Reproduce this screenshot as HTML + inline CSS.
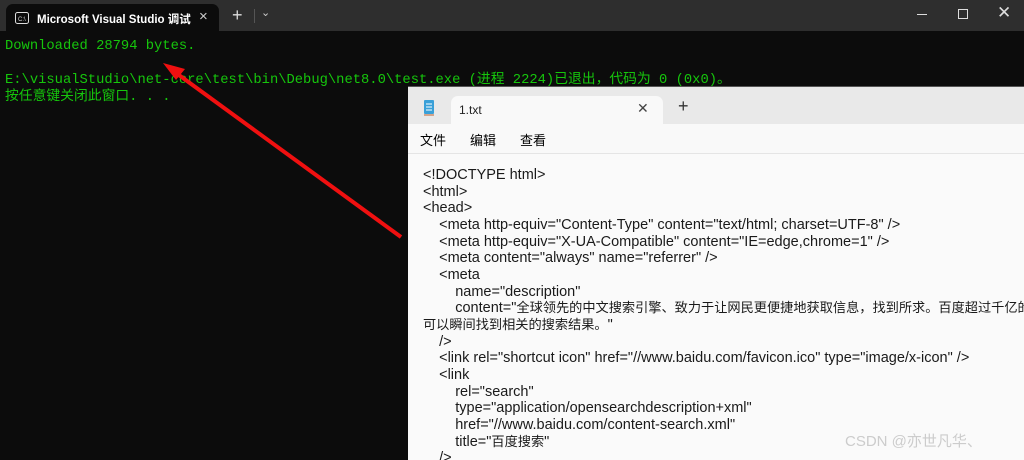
<!DOCTYPE html>
<html><head><meta charset="utf-8"><style>
body{margin:0;width:1024px;height:459px;overflow:hidden;background:#0c0c0c;position:relative;font-family:"Liberation Sans","Noto Sans CJK SC",sans-serif}
.tb{position:absolute;left:0;top:0;width:1024px;height:31px;background:#2e2e2e}
.tab{position:absolute;left:6px;top:4px;width:213px;height:27px;background:#0c0c0c;border-radius:7px 7px 0 0}
.tab span{position:absolute;left:31px;top:7px;color:#fff;font-size:11.5px;font-weight:bold;white-space:nowrap}
.term{position:absolute;left:5px;top:38px;color:#16c60c;font-family:"Liberation Mono","Noto Sans CJK SC",monospace;font-size:13.8px;line-height:17px;white-space:pre}
.np{position:absolute;left:408px;top:86px;width:616px;height:373px;background:#e9e9e9;border-top:1px solid #555}
.ntab{position:absolute;left:43px;top:9px;width:212px;height:28px;background:#f9f9f9;border-radius:7px 7px 0 0}
.menu{position:absolute;left:0;top:37px;width:616px;height:29px;background:#f9f9f9;border-bottom:1px solid #e5e5e5;font-size:13px}
.txt{position:absolute;left:0;top:67px;width:616px;height:306px;background:#fafafa;overflow:hidden}
.code{position:absolute;left:15px;top:13px;font-size:14.5px;line-height:16.65px;color:#1a1a1a;white-space:pre}
.c{font-size:13.2px}
</style></head><body>
<div class="tb">
 <div class="tab">
  <svg style="position:absolute;left:9px;top:8px" width="14" height="12"><rect x="0.5" y="0.5" width="13" height="11" rx="2" fill="none" stroke="#ddd"/><text x="3" y="9" font-size="6" fill="#ddd">C:\</text></svg>
  <span>Microsoft Visual Studio 调试</span>
  <div style="position:absolute;left:193px;top:4px;color:#ccc;font-size:15px">×</div>
 </div>
 <div style="position:absolute;left:232px;top:5px;color:#ddd;font-size:18px">+</div>
 <div style="position:absolute;left:254px;top:9px;width:1px;height:14px;background:#555"></div>
 <div style="position:absolute;left:261px;top:6px;color:#ccc;font-size:11px">⌄</div>
 <div style="position:absolute;left:917px;top:14px;width:10px;height:1px;background:#ddd"></div>
 <div style="position:absolute;left:958px;top:9px;width:8px;height:8px;border:1px solid #ddd"></div>
 <div style="position:absolute;left:997px;top:3px;color:#ddd;font-size:17px">✕</div>
</div>
<div class="term">Downloaded 28794 bytes.

E:\visualStudio\net-core\test\bin\Debug\net8.0\test.exe (进程 2224)已退出，代码为 0 (0x0)。
按任意键关闭此窗口. . .</div>
<svg style="position:absolute;left:0;top:0" width="1024" height="459"><line x1="401" y1="237" x2="172" y2="70" stroke="#f01010" stroke-width="4"/><polygon points="163,63 185,69 176,80" fill="#f01010"/></svg>
<div class="np">
 <svg style="position:absolute;left:15px;top:12px" width="12" height="17"><rect x="1" y="1" width="10" height="14" rx="1" fill="#3aa0d8"/><line x1="3" y1="5" x2="9" y2="5" stroke="#fff"/><line x1="3" y1="8" x2="9" y2="8" stroke="#fff"/><line x1="3" y1="11" x2="9" y2="11" stroke="#fff"/><line x1="1" y1="16" x2="11" y2="16" stroke="#c0602a"/></svg>
 <div class="ntab"><span style="position:absolute;left:8px;top:7px;font-size:12px;color:#222">1.txt</span><span style="position:absolute;left:186px;top:4px;font-size:14px;color:#444">✕</span></div>
 <div style="position:absolute;left:270px;top:9px;font-size:18px;color:#333">+</div>
 <div class="menu"><span style="position:absolute;left:12px;top:6px">文件</span><span style="position:absolute;left:62px;top:6px">编辑</span><span style="position:absolute;left:112px;top:6px">查看</span></div>
 <div class="txt"><div class="code">&lt;!DOCTYPE html&gt;
&lt;html&gt;
&lt;head&gt;
    &lt;meta http-equiv="Content-Type" content="text/html; charset=UTF-8" /&gt;
    &lt;meta http-equiv="X-UA-Compatible" content="IE=edge,chrome=1" /&gt;
    &lt;meta content="always" name="referrer" /&gt;
    &lt;meta
        name="description"
        content="<span class="c">全球领先的中文搜索引擎、致力于让网民更便捷地获取信息，找到所求。百度超过千亿的</span>
<span class="c">可以瞬间找到相关的搜索结果。</span>"
    /&gt;
    &lt;link rel="shortcut icon" href="//www.baidu.com/favicon.ico" type="image/x-icon" /&gt;
    &lt;link
        rel="search"
        type="application/opensearchdescription+xml"
        href="//www.baidu.com/content-search.xml"
        title="<span class="c">百度搜索</span>"
    /&gt;</div>
 <div style="position:absolute;left:437px;top:276px;color:#ccc;font-size:15px">CSDN @亦世凡华、</div></div>
</div>
</body></html>
